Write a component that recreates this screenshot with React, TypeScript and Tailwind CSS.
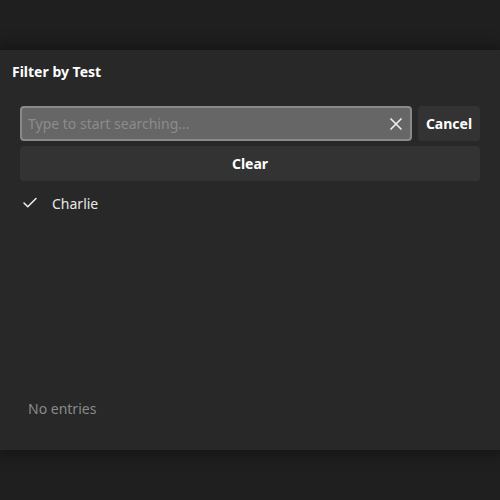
import { Check, X } from "lucide-react";

export default function App() {
  return (
    <div
      className="w-[500px] h-[500px] bg-[#1f1f1f] flex flex-col pt-[50px] text-white"
      style={{ fontFamily: '"Noto Sans", "Open Sans", sans-serif' }}
    >
      <div className="h-[400px] bg-[#282828] shadow-[0_0_14px_4px_rgba(0,0,0,0.35)] flex flex-col px-5">
        <div className="text-[14px] font-bold -mx-2 pt-[12px] leading-5">Filter by Test</div>

        <div className="flex gap-[6px] mt-[24px]">
          <div className="flex-1 h-[35px] rounded-[4px] border-2 border-[#8a8a8a] bg-[#666666] flex items-center pl-[6px] pr-[4px]">
            <span className="flex-1 text-[14px] text-[#8c8c8c]">Type to start searching...</span>
            <X size={20} strokeWidth={2} className="text-[#eeeeee]" />
          </div>
          <button className="w-[62px] h-[35px] rounded-[4px] bg-[#333333] text-[14px] font-bold">Cancel</button>
        </div>

        <button className="mt-[5px] h-[35px] rounded-[4px] bg-[#333333] text-[14px] font-bold">Clear</button>

        <div className="flex items-center mt-[12px] h-[20px]">
          <Check size={18} strokeWidth={2} className="ml-[1px] text-[#f0f0f0]" />
          <span className="ml-[13px] text-[14px] text-[#e8e8e8]">Charlie</span>
        </div>

        <div className="mt-auto mb-[31px] ml-[8px] text-[14px] text-[#8a8a8a]">No entries</div>
      </div>
    </div>
  );
}
